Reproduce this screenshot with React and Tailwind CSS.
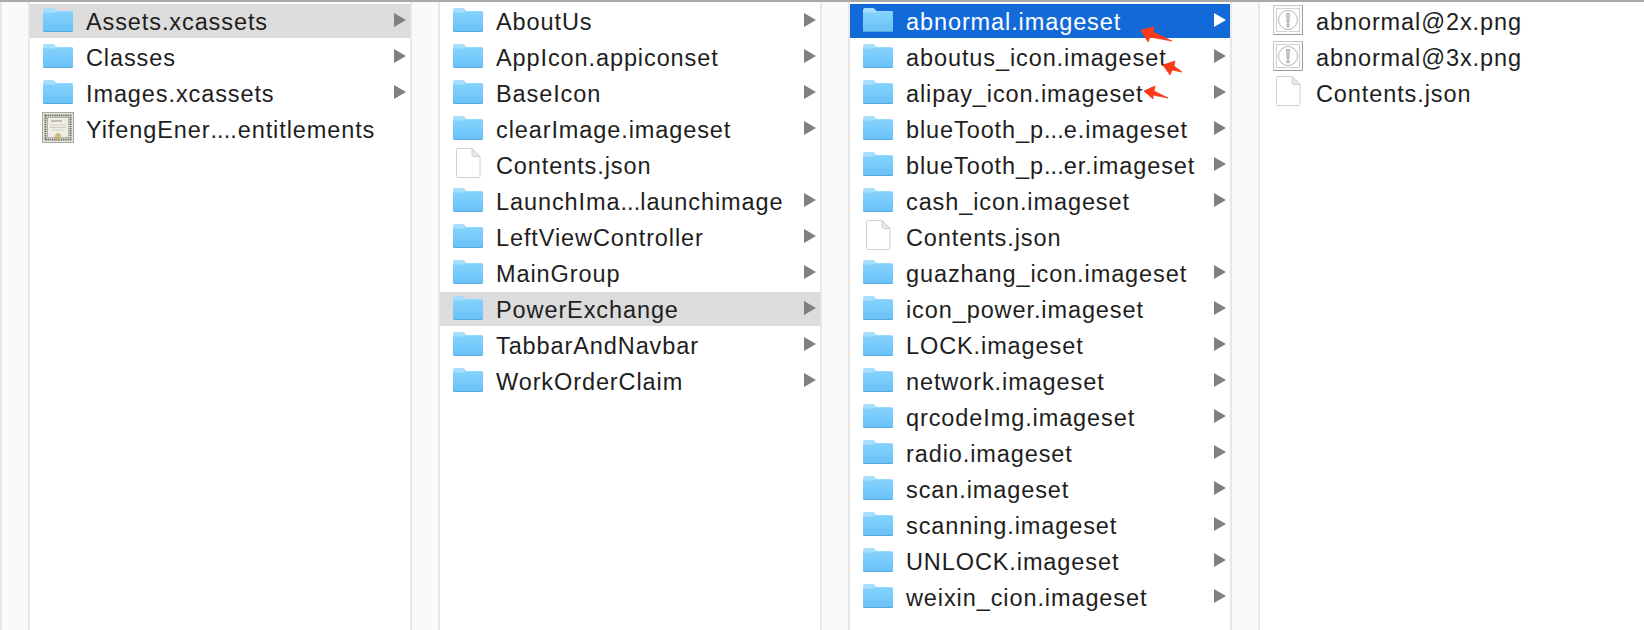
import React from "react";

function Folder() {
  return (
    <svg width="30" height="24" viewBox="0 0 30 24" className="shrink-0">
      <defs>
        <linearGradient id="fb" x1="0" y1="0" x2="0" y2="1">
          <stop offset="0" stopColor="#84d2fc" />
          <stop offset="1" stopColor="#68c1f8" />
        </linearGradient>
      </defs>
      <path d="M0 2 Q0 0 2 0 H9.5 Q11 0 12 1.2 L13.5 3 H28.5 Q30 3 30 4.5 V22 Q30 24 28 24 H2 Q0 24 0 22 Z" fill="#a5dffd" />
      <path d="M0 4.5 Q5 4.5 11 4.5 Q12.5 4.5 13.5 3.6 H28.5 Q30 3.6 30 5 V22 Q30 24 28 24 H2 Q0 24 0 22 Z" fill="url(#fb)" />
      <path d="M0.3 22.6 Q0.6 23.5 2 23.5 H28 Q29.4 23.5 29.7 22.6" fill="none" stroke="#59a8d9" strokeWidth="1" />
    </svg>
  );
}

function Certificate() {
  return (
    <svg width="32" height="31" viewBox="0 0 32 31" className="shrink-0 -ml-px">
      <rect x="0.5" y="0.5" width="31" height="30" fill="#e4e3dc" stroke="#a9a9a3" />
      <rect x="3.5" y="3.5" width="25" height="24" fill="#f0eee7" stroke="#6f6f68" strokeWidth="2" strokeDasharray="1.5 0.7" />
      <rect x="5.5" y="5.5" width="21" height="20" fill="#efede6" stroke="#a5a59d" strokeWidth="0.8" />
      <path d="M9 9 H20" stroke="#8c8c84" strokeWidth="1" />
      <path d="M8 13 H24 M8 15.5 H24 M10 18 H22" stroke="#cfcdc4" strokeWidth="1" />
      <circle cx="16" cy="24" r="3" fill="#c9b684" />
      <path d="M14 26 L13.5 29 H18.5 L18 26 Z" fill="#bda874" />
    </svg>
  );
}

function ImageFile() {
  return (
    <svg width="30" height="30" viewBox="0 0 30 30" className="shrink-0 mt-px">
      <rect x="0.5" y="0.5" width="29" height="29" fill="#fafafa" stroke="#c9c9c9" />
      <path d="M0.5 29.5 H29.5 V0.5" fill="none" stroke="#9d9d9d" />
      <rect x="3.5" y="3.5" width="23" height="23" fill="#fff" stroke="#d2d2d2" />
      <circle cx="15" cy="15" r="9.5" fill="none" stroke="#b5b5b5" />
      <path d="M13.6 8.5 H16.4 L15.7 18 H14.3 Z" fill="#d8d8d8" stroke="#a0a0a0" strokeWidth="0.9" />
      <circle cx="15" cy="20.5" r="1.4" fill="#d8d8d8" stroke="#a0a0a0" strokeWidth="0.9" />
    </svg>
  );
}

function Doc() {
  return (
    <svg width="30" height="30" viewBox="0 0 30 30" className="shrink-0">
      <path d="M3.5 1.5 Q3.5 0.5 4.5 0.5 H19 L27 8.5 V28.5 Q27 29.5 26 29.5 H4.5 Q3.5 29.5 3.5 28.5 Z" fill="#fff" stroke="#d0d0d0" />
      <path d="M19 0.5 V6.5 Q19 8.5 21 8.5 H27 Z" fill="#e9e9e9" stroke="#d0d0d0" />
    </svg>
  );
}

const icons = { f: Folder, c: Certificate, i: ImageFile, d: Doc };

function Row({ name, icon = "f", state }) {
  const Icon = icons[icon];
  const folder = icon === "f";
  const selected = state === "blue";
  const bg = selected ? "bg-[#1269d8]" : state === "gray" ? "bg-[#dcdcdc]" : "";
  const [head, tail] = name.split("…");
  return (
    <div className={`flex h-[34px] items-center pl-[13px] pr-[4px] ${bg}`}>
      <div className="flex h-[34px] w-[30px] shrink-0 items-start pt-[4px]">
        {folder ? <Icon /> : <div className="-mt-[4px]"><Icon /></div>}
      </div>
      <span className={`ml-[13px] flex-1 whitespace-nowrap pt-[1px] text-[23.5px] leading-[34px] tracking-[0.9px] ${selected ? "text-white" : "text-[#1e1e1e]"}`}>
        {head}
        {tail !== undefined && <span className="tracking-[0.1px]">...</span>}
        {tail}
      </span>
      {folder && (
        <svg width="12" height="14" viewBox="0 0 12 14" className="-mt-[2px] shrink-0">
          <path d="M0 0 L12 7 L0 14 Z" fill={selected ? "#ffffff" : "#808080"} />
        </svg>
      )}
    </div>
  );
}

function Rail() {
  return <div className="h-full w-[30px] shrink-0 border-x-2 border-[#e8e8e8] bg-[#fafafa]" />;
}

function Column({ rows, className = "w-[380px] shrink-0" }) {
  return (
    <div className={`flex h-full flex-col gap-[2px] bg-white pt-[2px] ${className}`}>
      {rows.map((r) => (
        <Row key={r.name} {...r} />
      ))}
    </div>
  );
}

const col1 = [
  { name: "Assets.xcassets", state: "gray" },
  { name: "Classes" },
  { name: "Images.xcassets" },
  { name: "YifengEner….entitlements", icon: "c" },
];
const col2 = [
  { name: "AboutUs" },
  { name: "AppIcon.appiconset" },
  { name: "BaseIcon" },
  { name: "clearImage.imageset" },
  { name: "Contents.json", icon: "d" },
  { name: "LaunchIma…launchimage" },
  { name: "LeftViewController" },
  { name: "MainGroup" },
  { name: "PowerExchange", state: "gray" },
  { name: "TabbarAndNavbar" },
  { name: "WorkOrderClaim" },
];
const col3 = [
  { name: "abnormal.imageset", state: "blue" },
  { name: "aboutus_icon.imageset" },
  { name: "alipay_icon.imageset" },
  { name: "blueTooth_p…e.imageset" },
  { name: "blueTooth_p…er.imageset" },
  { name: "cash_icon.imageset" },
  { name: "Contents.json", icon: "d" },
  { name: "guazhang_icon.imageset" },
  { name: "icon_power.imageset" },
  { name: "LOCK.imageset" },
  { name: "network.imageset" },
  { name: "qrcodeImg.imageset" },
  { name: "radio.imageset" },
  { name: "scan.imageset" },
  { name: "scanning.imageset" },
  { name: "UNLOCK.imageset" },
  { name: "weixin_cion.imageset" },
];
const col4 = [
  { name: "abnormal@2x.png", icon: "i" },
  { name: "abnormal@3x.png", icon: "i" },
  { name: "Contents.json", icon: "d" },
];

export default function App() {
  return (
    <div className="relative flex h-[630px] w-[1644px] flex-col overflow-hidden bg-white font-['Liberation_Sans',Arial,sans-serif]">
      <div className="h-[2px] shrink-0 bg-[#a9a9a9]" />
      <div className="flex min-h-0 flex-1">
        <Rail />
        <Column rows={col1} />
        <Rail />
        <Column rows={col2} />
        <Rail />
        <Column rows={col3} />
        <Rail />
        <Column rows={col4} className="flex-1" />
      </div>
      <svg width="1644" height="630" viewBox="0 0 1644 630" className="pointer-events-none absolute left-0 top-0">
        <path d="M1141 30 L1154 27 L1153 32 L1172 41 L1150 37 L1148 42 Z" fill="#fb3a1b" stroke="#fb3a1b" strokeWidth="0.8" strokeLinejoin="round" />
        <path d="M1163 65 L1175 61 L1174 66 L1182 72 L1172 70 L1170 75 Z" fill="#fb3a1b" stroke="#fb3a1b" strokeWidth="0.8" strokeLinejoin="round" />
        <path d="M1144 91 L1155 86 L1154 91 L1168 98 L1153 95 L1153 99 Z" fill="#fb3a1b" stroke="#fb3a1b" strokeWidth="0.8" strokeLinejoin="round" />
      </svg>
    </div>
  );
}
